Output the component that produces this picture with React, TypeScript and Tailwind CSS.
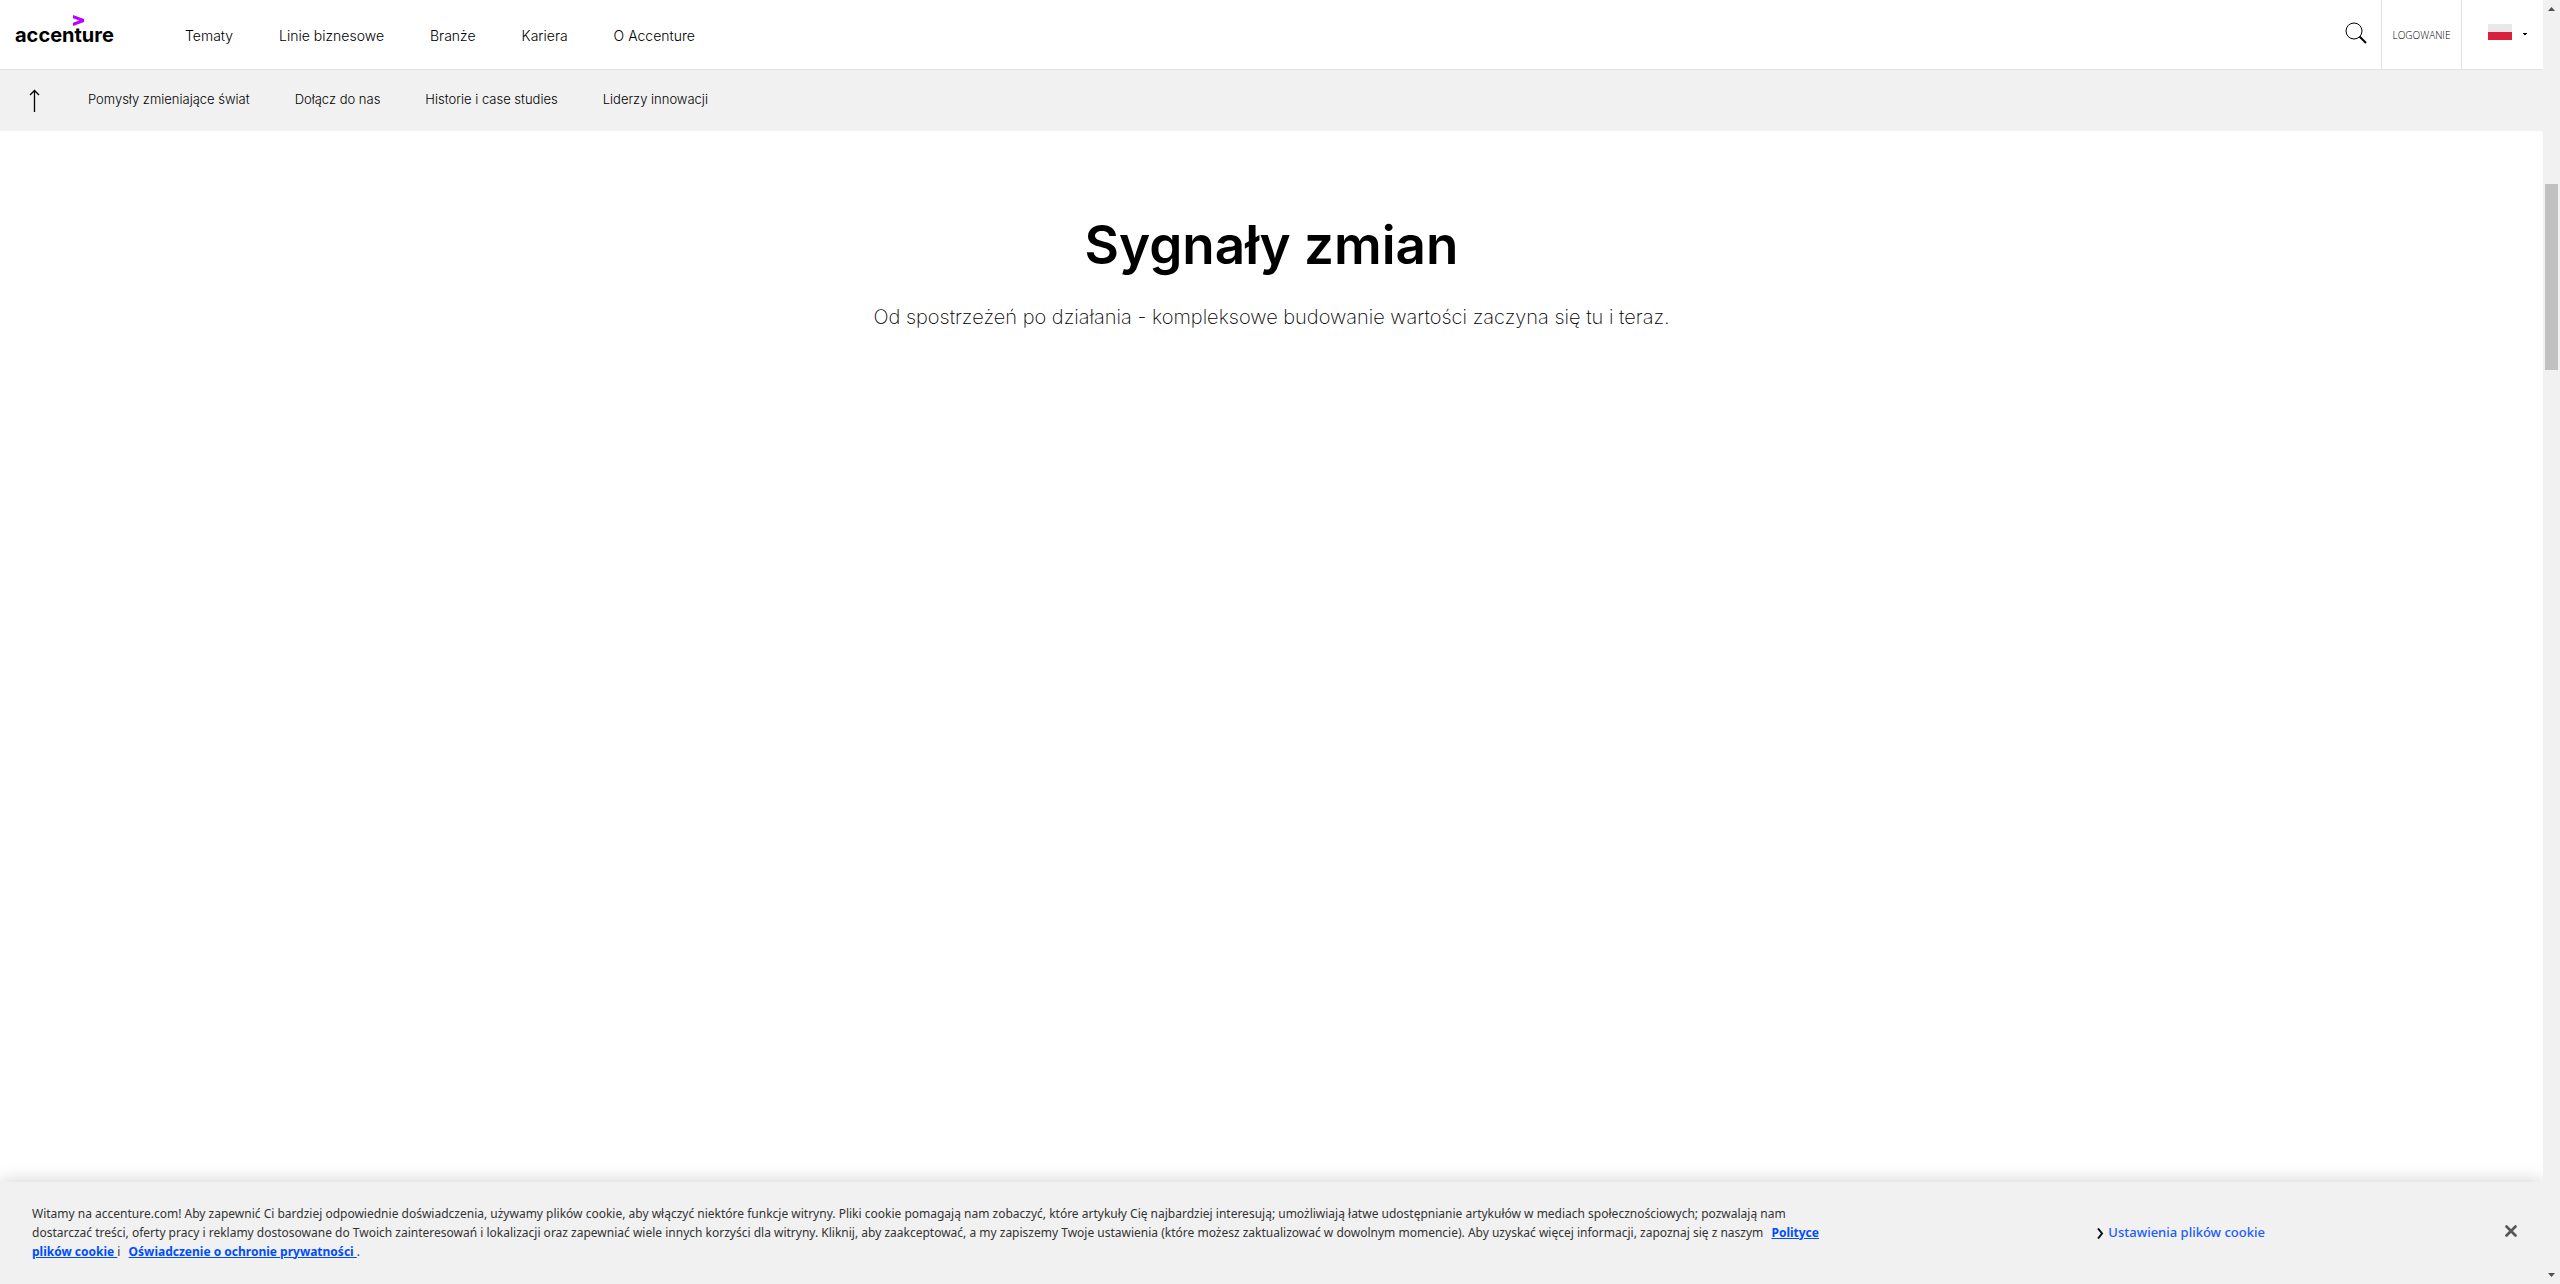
const mainLinks = ['Tematy', 'Linie biznesowe', 'Branże', 'Kariera', 'O Accenture'];
const subLinks = ['Pomysły zmieniające świat', 'Dołącz do nas', 'Historie i case studies', 'Liderzy innowacji'];

function Logo() {
  return (
    <a href="#" aria-label="accenture" className="relative ml-[15px] mt-[19px] block w-[101px] text-[20px] leading-8 font-bold text-black">
      accenture
      <svg className="absolute -top-1 left-[58px] h-[11px] w-[11px]" viewBox="0 0 11 11" aria-hidden="true">
        <path d="M0 0 L11 4 V7 L0 11 V7.7 L6.2 5.5 L0 3.2 Z" fill="#b800ff" />
      </svg>
    </a>
  );
}

function Header() {
  return (
    <header className="flex h-[70px] border-b border-[#e2e2e2] bg-white">
      <Logo />
      <nav className="ml-[69px] flex items-center gap-[46px] pt-[2px] text-[14px] font-light text-black">
        {mainLinks.map((label) => (
          <a key={label} href="#" className="whitespace-nowrap">{label}</a>
        ))}
      </nav>
      <div className="ml-auto flex">
        <button type="button" aria-label="Szukaj" className="flex w-[52px] items-start justify-center pt-[22px] pl-[2px]">
          <svg width="22" height="22" viewBox="0 0 22 22" fill="none" stroke="#000" aria-hidden="true">
            <circle cx="9" cy="9" r="8" strokeWidth="1" />
            <path d="M14.5 14.5 L21 21" strokeWidth="2" />
          </svg>
        </button>
        <a href="#" className="flex w-20 items-center justify-center border-l border-[#e2e2e2] pt-px font-['Open_Sans',sans-serif] text-[10px] font-light text-black">
          LOGOWANIE
        </a>
        <button type="button" aria-label="Polska" className="flex w-[82px] items-start border-l border-[#e2e2e2] pt-6 pl-[26px]">
          <span className="block h-4 w-6 bg-gradient-to-b from-[#e8e8e8] from-50% to-[#d7213f] to-50%" />
          <svg className="mt-[9px] ml-[11px]" width="4" height="2" viewBox="0 0 4 2" aria-hidden="true">
            <path d="M0 0H4V1H3V2H1V1H0Z" fill="#000" />
          </svg>
        </button>
      </div>
    </header>
  );
}

function SubNav() {
  return (
    <nav className="flex h-[61px] items-center bg-[#f1f1f1] text-[13px] font-light text-black">
      <a href="#" aria-label="Do góry" className="ml-[29px]">
        <svg width="11" height="23" viewBox="0 0 11 23" fill="none" stroke="#000" strokeWidth="1.3" aria-hidden="true">
          <path d="M5.5 23V1.5M1 6L5.5 1.5L10 6" />
        </svg>
      </a>
      <div className="mb-[2px] ml-12 flex gap-[45px]">
        {subLinks.map((label) => (
          <a key={label} href="#" className="whitespace-nowrap">{label}</a>
        ))}
      </div>
    </nav>
  );
}

function CookieBar() {
  return (
    <section aria-label="Pliki cookie" className="flex h-[102px] items-center bg-[#f1f1f1] pl-8 font-['Noto_Sans',sans-serif] text-[13px] text-[#333] shadow-[0_0_18px_rgba(0,0,0,0.2)]">
      <p className="w-[73%] shrink-0 pb-[2px] text-[12px] leading-[19px]">
        Witamy na accenture.com! Aby zapewnić Ci bardziej odpowiednie doświadczenia, używamy plików cookie, aby włączyć niektóre funkcje witryny. Pliki cookie pomagają nam zobaczyć, które artykuły Cię najbardziej interesują; umożliwiają łatwe udostępnianie artykułów w mediach społecznościowych; pozwalają nam
        <br />
        dostarczać treści, oferty pracy i reklamy dostosowane do Twoich zainteresowań i lokalizacji oraz zapewniać wiele innych korzyści dla witryny. Kliknij, aby zaakceptować, a my zapiszemy Twoje ustawienia (które możesz zaktualizować w dowolnym momencie). Aby uzyskać więcej informacji, zapoznaj się z naszym{' '}
        <a href="#" className="font-bold text-[#004cff] underline"><span className="ml-[5px]">Polityce</span><br />plików cookie </a>
        i{' '}
        <a href="#" className="ml-[5px] font-bold text-[#004cff] underline">Oświadczenie o ochronie prywatności </a>.
      </p>
      <button type="button" className="ml-auto flex items-center gap-1 font-medium whitespace-nowrap text-[#1a5cff]">
        <svg width="7" height="11" viewBox="0 0 7 11" fill="none" stroke="#111" strokeWidth="2" aria-hidden="true">
          <path d="M1 .5L5 5.5L1 10.5" />
        </svg>
        Ustawienia plików cookie
      </button>
      <button type="button" aria-label="Zamknij" className="mr-[26px] ml-[240px] pb-1">
        <svg width="12" height="12" viewBox="0 0 12 12" stroke="#565656" strokeWidth="2.6" strokeLinecap="round" aria-hidden="true">
          <path d="M1.5 1.5L10.5 10.5M10.5 1.5L1.5 10.5" />
        </svg>
      </button>
    </section>
  );
}

function ScrollTrack() {
  return (
    <div className="flex w-[17px] shrink-0 flex-col items-center bg-[#f1f1f1] py-[7px]" aria-hidden="true">
      <svg width="7" height="4" viewBox="0 0 7 4"><path d="M0 4L3.5 0L7 4Z" fill="#505050" /></svg>
      <div className="mt-[173px] h-[186px] w-[13px] bg-[#c1c1c1]" />
      <svg className="mt-auto" width="7" height="4" viewBox="0 0 7 4"><path d="M0 0L3.5 4L7 0Z" fill="#505050" /></svg>
    </div>
  );
}

export default function App() {
  return (
    <div className="flex min-h-screen bg-white font-['Inter',sans-serif]">
      <div className="flex min-w-0 flex-1 flex-col overflow-hidden">
        <Header />
        <SubNav />
        <main className="flex-1 pt-20 text-center text-black">
          <h1 className="text-[53px] leading-[68px] font-semibold">Sygnały zmian</h1>
          <p className="mt-[22px] text-[20px] leading-8 font-extralight">
            Od spostrzeżeń po działania - kompleksowe budowanie wartości zaczyna się tu i teraz.
          </p>
        </main>
        <CookieBar />
      </div>
      <ScrollTrack />
    </div>
  );
}
